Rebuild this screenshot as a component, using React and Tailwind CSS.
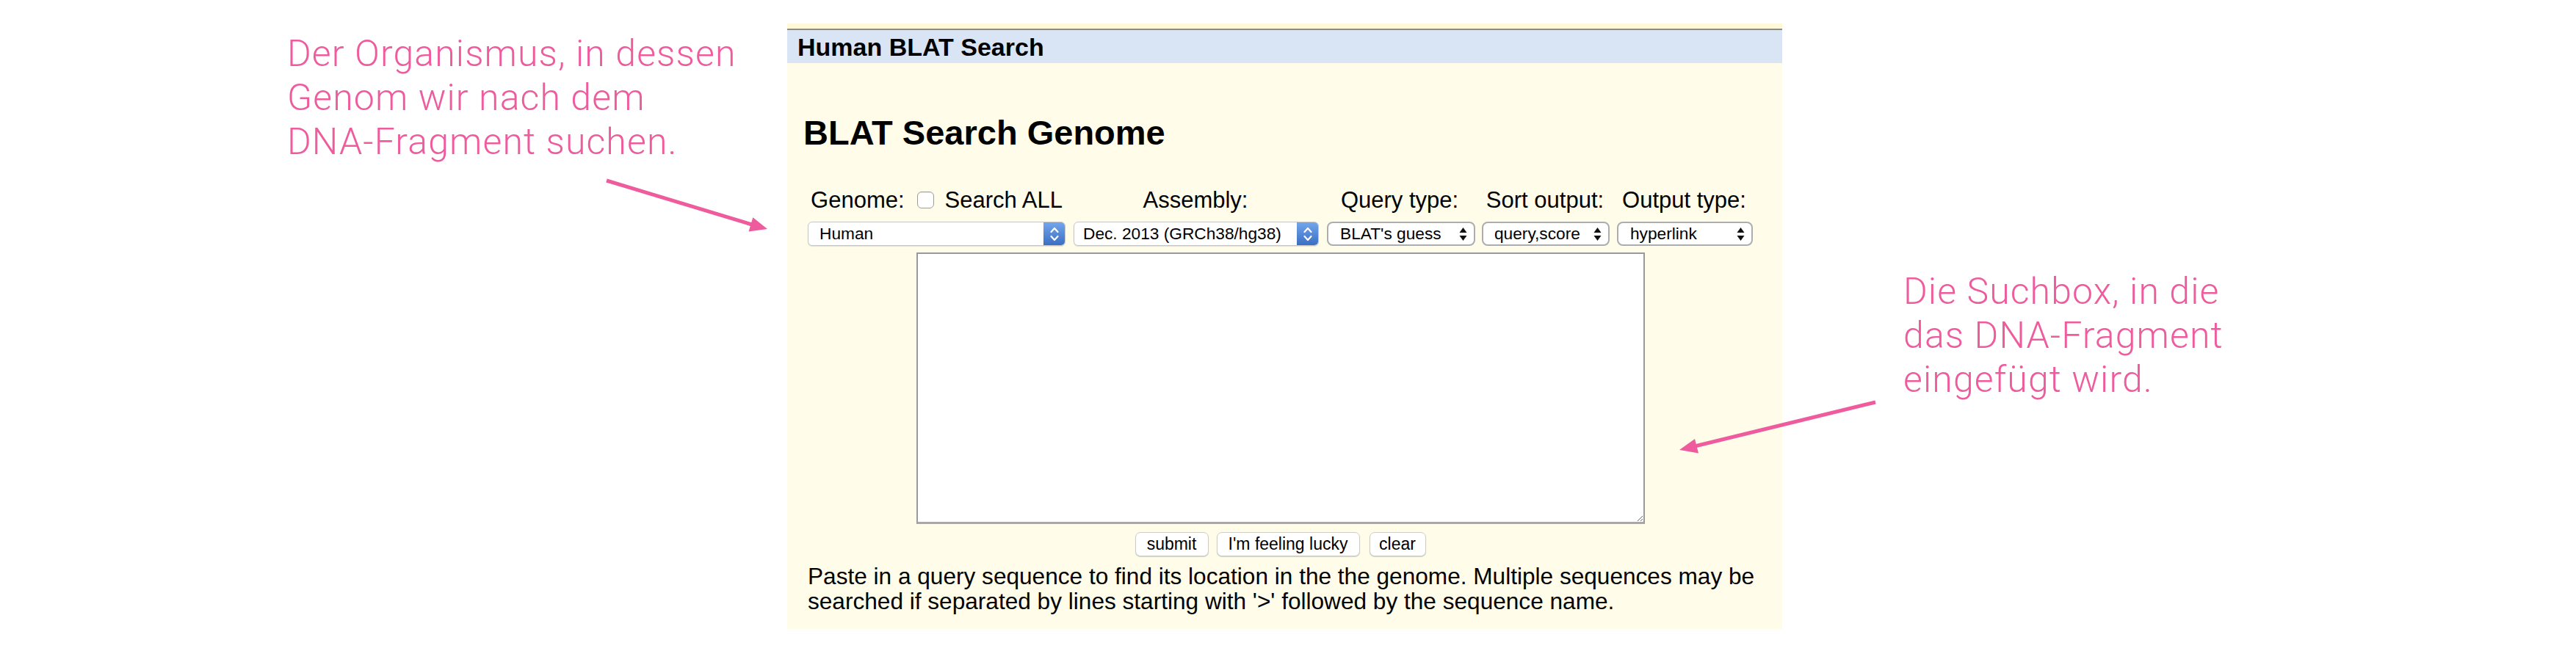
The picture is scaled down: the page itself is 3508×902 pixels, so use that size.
import React from 'react';

// Blue Mac-style stepper used by the genome/assembly selects
function Stepper() {
  return (
    <div className="flex h-full w-[29px] shrink-0 items-center justify-center rounded-r-[5px] bg-linear-to-b from-[#74a6ec] to-[#3a6fc4]">
      <svg width="14" height="24" viewBox="0 0 14 24" fill="none" stroke="white" strokeWidth="2.2" strokeLinecap="round" strokeLinejoin="round">
        <path d="M2.5 9 L7 4 L11.5 9" />
        <path d="M2.5 15 L7 20 L11.5 15" />
      </svg>
    </div>
  );
}

function Triangles() {
  return (
    <svg width="11" height="20" viewBox="0 0 11 20" className="shrink-0">
      <path d="M5.5 1 L10.5 8 L0.5 8 Z" fill="#111" />
      <path d="M0.5 12 L10.5 12 L5.5 19 Z" fill="#111" />
    </svg>
  );
}

function BlueSelect({ value, width, pad }) {
  return (
    <div className={`flex h-[33px] items-stretch rounded-[6px] border border-[#c6c6c6] bg-white shadow-[0_1px_1px_rgba(0,0,0,0.12)] ${width}`}>
      <div className={`flex flex-1 items-center text-[22.7px] text-black ${pad}`}>{value}</div>
      <Stepper />
    </div>
  );
}

function PlainSelect({ value, width, pad }) {
  return (
    <div className={`flex h-[33px] items-center justify-between rounded-[8px] border-2 border-[#adadad] bg-white pr-[9px] ${width} ${pad}`}>
      <span className="text-[22.7px] text-black">{value}</span>
      <Triangles />
    </div>
  );
}

function Button({ children, width }) {
  return (
    <button className={`flex h-[33px] items-center justify-center rounded-[7px] border border-[#cdcdcd] bg-white text-[23px] text-black shadow-[0_1px_1px_rgba(0,0,0,0.18)] ${width}`}>
      {children}
    </button>
  );
}

const columns = [
  { label: null, w: 'w-[351px]' },
  { label: 'Assembly:', w: 'w-[334px]' },
  { label: 'Query type:', w: 'w-[202px]' },
  { label: 'Sort output:', w: 'w-[174px]' },
  { label: 'Output type:', w: 'w-[185px]' },
];

export default function App() {
  return (
    <div className="relative h-[902px] w-[3508px] overflow-hidden bg-white">
      <div className="flex">
        {/* left note */}
        <div className="w-[1072px] shrink-0 pl-[391px] pt-[43px] font-['Roboto',sans-serif] text-[50px] font-light leading-[60px] tracking-[1.1px] text-[#ee5c9e]">
          Der Organismus, in dessen<br />
          Genom wir nach dem<br />
          DNA-Fragment suchen.
        </div>

        {/* BLAT panel */}
        <div className="mt-[32px] w-[1355px] shrink-0 bg-[#fffde9] pb-[21px] font-['Liberation_Sans',Arial,sans-serif] text-black">
          <div className="h-[7px] bg-[#fff8d9]" />
          <div className="h-[2px] bg-[#8a8a8a]" />
          <div className="flex h-[45px] items-center bg-[#d9e4f5] pl-[14px]">
            <span className="text-[34px] font-bold leading-none">Human BLAT Search</span>
          </div>

          <div className="pl-[28px] pr-[27px]">
            <h2 className="-ml-[6px] mt-[71px] text-[47px] font-bold leading-[47px]">BLAT Search Genome</h2>

            <div className="w-[1287px]">
              <div className="mt-[53px] flex gap-[10px]">
                {columns.map((c, i) => (
                  <div key={i} className={`flex ${c.w} justify-center text-[31px] leading-[31px]`}>
                    {c.label ? (
                      c.label
                    ) : (
                      <div className="flex items-center">
                        <span>Genome:</span>
                        <span className="ml-[17px] mr-[15px] h-[23px] w-[23px] rounded-[6px] border border-[#9d9d9d] bg-white shadow-[inset_0_1px_1px_rgba(0,0,0,0.08)]" />
                        <span>Search ALL</span>
                      </div>
                    )}
                  </div>
                ))}
              </div>

              <div className="mt-[14px] flex">
                <BlueSelect value="Human" width="w-[351px]" pad="pl-[15px]" />
                <div className="ml-[11px]">
                  <BlueSelect value="Dec. 2013 (GRCh38/hg38)" width="w-[334px]" pad="pl-[12px]" />
                </div>
                <div className="ml-[11px]">
                  <PlainSelect value="BLAT's guess" width="w-[202px]" pad="pl-[16px]" />
                </div>
                <div className="ml-[9px]">
                  <PlainSelect value="query,score" width="w-[174px]" pad="pl-[15px]" />
                </div>
                <div className="ml-[10px]">
                  <PlainSelect value="hyperlink" width="w-[185px]" pad="pl-[16px]" />
                </div>
              </div>

              <div className="mt-[9px] flex justify-center">
                <textarea className="block h-[370px] w-[992px] resize border-2 border-[#9a9a9a] border-b-[3px] border-b-[#a8a8a8] bg-white outline-none" />
              </div>

              <div className="mt-[11px] flex justify-center gap-[11px]">
                <Button width="w-[100px]">submit</Button>
                <Button width="w-[195px]">I'm feeling lucky</Button>
                <div className="ml-[2px]">
                  <Button width="w-[77px]">clear</Button>
                </div>
              </div>
            </div>

            <p className="mt-[10px] text-[31.6px] leading-[34px]">
              Paste in a query sequence to find its location in the the genome. Multiple sequences may be
              searched if separated by lines starting with '&gt;' followed by the sequence name.
            </p>
          </div>
        </div>

        {/* right note */}
        <div className="shrink-0 pl-[165px] pt-[367px] font-['Roboto',sans-serif] text-[50px] font-light leading-[60px] tracking-[1.1px] text-[#ee5c9e]">
          Die Suchbox, in die<br />
          das DNA-Fragment<br />
          eingefügt wird.
        </div>
      </div>

      {/* arrows */}
      <svg className="pointer-events-none absolute left-0 top-0" width="3508" height="902" viewBox="0 0 3508 902">
        <line x1="826" y1="246" x2="1024" y2="306" stroke="#ee5c9e" strokeWidth="5" />
        <polygon points="1045,312 1019.5,315.5 1025.3,296.3" fill="#ee5c9e" />
        <line x1="2554" y1="548" x2="2308" y2="608" stroke="#ee5c9e" strokeWidth="5" />
        <polygon points="2287,613 2308,598 2313,617.5" fill="#ee5c9e" />
      </svg>
    </div>
  );
}
